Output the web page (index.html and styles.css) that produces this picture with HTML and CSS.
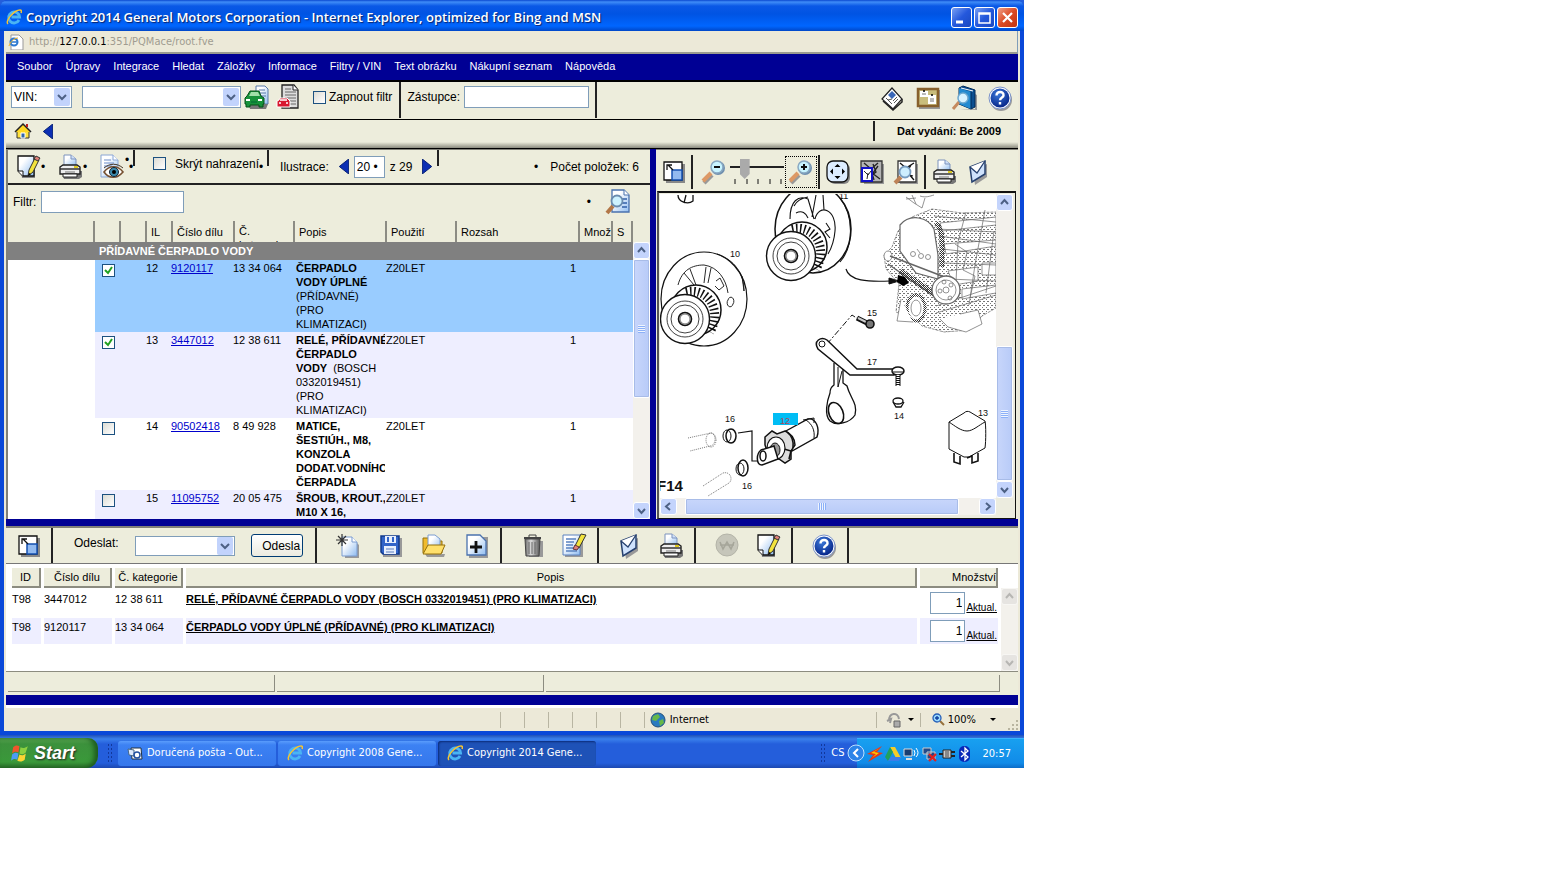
FILE: index.html
```
<!DOCTYPE html>
<html lang="cs">
<head>
<meta charset="UTF-8" />
<meta name="viewport" content="width=device-width, initial-scale=1" />
<title>Copyright 2014 General Motors Corporation</title>
<link rel="stylesheet" href="styles.css">
</head>
<body>

<!-- Icon sprite -->
<svg class="sprite" aria-hidden="true">
  <defs>
    <linearGradient id="paper" x1="0" y1="0" x2="1" y2="1"><stop offset="0.3" stop-color="#fff"/><stop offset="1" stop-color="#8fbcf0"/></linearGradient>
    <linearGradient id="metal" x1="0" y1="0" x2="1" y2="0"><stop offset="0" stop-color="#666"/><stop offset="0.4" stop-color="#ddd"/><stop offset="1" stop-color="#555"/></linearGradient>
    <radialGradient id="ball" cx="0.4" cy="0.3" r="0.8"><stop offset="0" stop-color="#3b78d8"/><stop offset="1" stop-color="#001c80"/></radialGradient>
    <symbol id="i-ie" viewBox="0 0 16 16">
      <path d="M13 11a5.500 5.500 0 1 1 .6-3H5.500" fill="none" stroke="#49b4f4" stroke-width="2.800"/>
      <path d="M2 15C-1 12 8 1 14 1c2 0 1.500 2 1 3" fill="none" stroke="#f4c434" stroke-width="1.500"/>
    </symbol>
    <symbol id="i-car" viewBox="0 0 26 26">
      <path d="M12 2h9l3 3v15H12z" fill="url(#paper)" stroke="#5779a8"/><path d="M15 6h6M15 9h7M17 12h5" stroke="#5779a8"/>
      <path d="M5 20h19l-2 5H6z" fill="#777"/>
      <path d="M2 20v3h4v-2h9v2h4v-3h1v-6l-3-2-2-5H6l-3 5-2 2v6z" fill="#16923a" stroke="#045018"/><path d="M5 12l2-4h7l2 4z" fill="#9fe0a8"/><path d="M2 16h4M14 16h4" stroke="#fff" stroke-width="2"/><path d="M7 18h6" stroke="#063"/>
    </symbol>
    <symbol id="i-cardoc" viewBox="0 0 26 26">
      <path d="M6 1h12l4 5v18H6z" fill="#ddd" stroke="#222" stroke-width="1.300"/><path d="M17 1v5h5" fill="#fff" stroke="#222"/>
      <path d="M9 5h6M9 8h11M9 11h11M9 14h11M14 17h6M14 20h6" stroke="#666"/>
      <path d="M1 23v-6l2-1 1-2h7l2 2 1 1v6z" fill="#d81830" stroke="#fff"/><path d="M4 16h7M3 19h2M10 19h2" stroke="#fff" stroke-width="1.500"/>
    </symbol>
    <symbol id="i-news" viewBox="0 0 26 26">
      <path d="M3 14L13 3l10 11-9 10z" fill="#fff" stroke="#222" stroke-width="1.200"/><path d="M4 16l10 9 9-8v-3" fill="none" stroke="#222" stroke-width="1.500"/>
      <path d="M9 10l4-4 4 4-4 4z" fill="#3a68b8"/><path d="M7 13l6 6M9 15l4-1M14 16l4-4M15 18l4-4" stroke="#555"/>
    </symbol>
    <symbol id="i-board" viewBox="0 0 26 26">
      <path d="M4 5h21v19H4z" fill="#999"/><path d="M3 4h20v17H3z" fill="#c9bd7c" stroke="#87602c" stroke-width="2.500"/>
      <path d="M5 6h8v6H5zM13 10h8v9h-8z" fill="#fff"/><path d="M7 9h4M15 14h4M15 16h4" stroke="#777"/><circle cx="9" cy="6" r="1"/><circle cx="17" cy="10" r="1"/>
    </symbol>
    <symbol id="i-book" viewBox="0 0 26 26">
      <path d="M9 24h15V9l2 1v15z" fill="#999"/>
      <path d="M8 3l4-2 12 4v17l-4 2-12-5z" fill="#0b4f90" stroke="#012a58"/><path d="M8 3l12 4v17L8 19z" fill="#238ad0"/><path d="M10 3l12 3" stroke="#fff"/><path d="M20 7v17" stroke="#012a58"/>
      <path d="M8 17l-6 7" stroke="#c58a5e" stroke-width="3"/><circle cx="12" cy="13" r="5" fill="#d8f2ff" stroke="#6da8d0" stroke-width="1.500"/>
    </symbol>
    <symbol id="i-help" viewBox="0 0 26 26">
      <circle cx="14" cy="15" r="11" fill="#999"/><circle cx="13" cy="13" r="11" fill="#fff" stroke="#7a92c8"/><circle cx="13" cy="13" r="9.500" fill="url(#ball)"/>
      <path d="M9.500 10.500c0-5 7.500-4.500 7 0-.2 2-3.500 2-3.500 4.800M13 17v2.600" fill="none" stroke="#fff" stroke-width="2.400"/>
    </symbol>
    <symbol id="i-home" viewBox="0 0 18 18">
      <path d="M3 9v7h12V9" fill="#ffe23c" stroke="#333"/><path d="M1 10l8-8 8 8" fill="#ffd824" stroke="#222" stroke-width="1.500"/><path d="M7 16v-5h4v5z" fill="#36a" stroke="#fff"/><path d="M13 5V2" stroke="#b22" stroke-width="2"/>
    </symbol>
    <symbol id="i-note" viewBox="0 0 26 26">
      <path d="M5 4h15v20H7z" fill="#888"/><path d="M3 2h16v20H8l-5-5z" fill="url(#paper)" stroke="#111" stroke-width="1.300"/><path d="M3 17h5v5" fill="#fff" stroke="#111"/>
      <path d="M13 22l1-6 6-12 4 2-6 12z" fill="#f2e33c" stroke="#333"/><path d="M19 5l2-3 4 2-2 3z" fill="#e08078" stroke="#333"/><path d="M13 22l1-3 2 1z"/>
    </symbol>
    <symbol id="i-print" viewBox="0 0 26 26">
      <path d="M5 17h20v6l-3 2H7z" fill="#777"/><path d="M7 12V1h7l5 4v7z" fill="url(#paper)" stroke="#7d93bd"/><path d="M14 1v4h5" fill="#cfe0fa" stroke="#7d93bd"/>
      <path d="M3 13l3-2h14l3 2v7H3z" fill="#eee" stroke="#222" stroke-width="1.400"/><path d="M3 15h20" stroke="#333" stroke-width="1.500"/><path d="M6 20h14v3H6z" fill="#fff" stroke="#222"/><path d="M17 13h4" stroke="#dcc820" stroke-width="2"/><path d="M8 18h10" stroke="#777"/>
    </symbol>
    <symbol id="i-eye" viewBox="0 0 26 26">
      <path d="M2 1h12l5 5v17H2z" fill="url(#paper)" stroke="#8aa6d4"/><path d="M14 1v5h5" fill="#fff" stroke="#8aa6d4"/><path d="M5 6h7M5 9h10M5 12h8" stroke="#6c8cc8"/>
      <path d="M5 18c5-7 14-7 19 0-6 7-14 7-19 0z" fill="#fff" stroke="#765030" stroke-width="1.600"/><circle cx="15" cy="18" r="4.500" fill="#3c8aac" stroke="#123"/><circle cx="15" cy="18" r="2"/><path d="M5 14c6-5 13-5 19 0" fill="none" stroke="#432"/>
    </symbol>
    <symbol id="i-search-doc" viewBox="0 0 26 26">
      <path d="M7 1h12l5 5v17H7z" fill="url(#paper)" stroke="#4a72ae" stroke-width="1.300"/><path d="M19 1v5h5" fill="#fff" stroke="#4a72ae"/><path d="M17 10h5M17 14h5M17 18h5" stroke="#3260a8" stroke-width="1.500"/>
      <path d="M8 17l-6 7" stroke="#b27748" stroke-width="4"/><circle cx="12" cy="12" r="5.500" fill="#cdf2ff" stroke="#6b8cae" stroke-width="1.800"/>
    </symbol>
    <symbol id="i-fit" viewBox="0 0 26 26">
      <path d="M5 5h19v19H5z" fill="#888"/><path d="M3 3h18v18H3z" fill="#fff" stroke="#111" stroke-width="1.300"/><path d="M11 11h10v10H11z" fill="#92baf0" stroke="#1550b0" stroke-width="1.500"/><path d="M12 11L7 6M6 11V6h5" fill="none" stroke="#111" stroke-width="1.300"/>
    </symbol>
    <symbol id="i-minus" viewBox="0 0 26 26">
      <path d="M11 16l-8 8" stroke="#999" stroke-width="4.500"/><path d="M10 14l-8 8" stroke="#dd9865" stroke-width="4"/><circle cx="17" cy="9" r="7" fill="#6f8fae"/><circle cx="16" cy="8" r="6" fill="#c8f4ff" stroke="#8aa9c2" stroke-width="1.500"/><path d="M13 8h6" stroke="#111" stroke-width="2"/>
    </symbol>
    <symbol id="i-plus" viewBox="0 0 26 26"><use href="#i-minus"/><path d="M16 5v6" stroke="#111" stroke-width="2"/></symbol>
    <symbol id="i-move" viewBox="0 0 26 26">
      <rect x="4" y="4" width="21" height="21" rx="6" fill="#888"/><rect x="2" y="2" width="21" height="21" rx="6" fill="#dcecff" stroke="#111" stroke-width="1.300"/>
      <path d="M12.500 5l3 3h-6zM12.500 20l3-3h-6zM5 12.500l3-3v6zM20 12.500l-3-3v6z"/>
    </symbol>
    <symbol id="i-part" viewBox="0 0 26 26">
      <path d="M5 5h20v20H5z" fill="#999"/><path d="M2 2h21v21H2z" fill="#b4b4b4" stroke="#333" stroke-width="1.300"/><path d="M5 4l7 6 7-6M15 21l-2-7 8 6M14 5l3 8-5 4M19 7l-5 7" fill="none" stroke="#222" stroke-width="1.300"/>
      <path d="M3 9h10v13H3z" fill="#fff" stroke="#1212c8" stroke-width="2"/><path d="M5 12l4 4 3-4M8 20l1-6" fill="none" stroke="#222"/>
    </symbol>
    <symbol id="i-partzoom" viewBox="0 0 26 26">
      <path d="M7 5h18v20H7z" fill="#999"/><path d="M5 2h18v21H5z" fill="#fff" stroke="#333" stroke-width="1.300"/><path d="M7 4l6 5 8-5M21 21l-6-7M18 6l-5 9 7 2" fill="none" stroke="#111" stroke-width="1.300"/>
      <path d="M8 18l-6 6" stroke="#bd8257" stroke-width="4"/><circle cx="12" cy="13" r="5.500" fill="#cdeeff" stroke="#789cc0" stroke-width="1.800"/>
    </symbol>
    <symbol id="i-mail" viewBox="0 0 26 26">
      <path d="M7 11l14-6v13L9 26z" fill="#999"/><path d="M4 8l15-6v13L6 23z" fill="#cfe2fc" stroke="#26406e" stroke-width="1.500"/><path d="M4 8l7 6 8-12" fill="#fff" stroke="#26406e" stroke-width="1.300"/>
    </symbol>
    <symbol id="i-new" viewBox="0 0 26 26">
      <path d="M10 7h9l5 5v13H10z" fill="#999"/><path d="M7 4h10l5 5v14H7z" fill="url(#paper)" stroke="#7b9cd0"/><path d="M17 4v5h5" fill="#fff" stroke="#7b9cd0"/><path d="M7 1v12M1 7h12M3 3l8 8M11 3l-8 8" stroke="#333" stroke-width="1.200"/>
    </symbol>
    <symbol id="i-save" viewBox="0 0 26 26">
      <path d="M5 5h19v19H5z" fill="#999"/><path d="M3 3h18v18H5l-2-2z" fill="#3264c8" stroke="#123a8c" stroke-width="1.500"/><path d="M7 3h11v7H7zM6 13h12v8H6z" fill="#e8effc"/><path d="M10 4v5M15 4v5" stroke="#3264c8" stroke-width="2"/><path d="M8 16h8M8 19h8" stroke="#5d7fbd"/>
    </symbol>
    <symbol id="i-open" viewBox="0 0 26 26">
      <path d="M4 21h20l-1 3H6z" fill="#999"/><path d="M2 5h6l2 3h11v12H2z" fill="#f0bb2c" stroke="#94700c"/><path d="M7 2h7l5 4v12H7z" fill="url(#paper)" stroke="#7b9cd0"/><path d="M2 21l5-9h17l-4 9z" fill="#ffe06c" stroke="#94700c"/>
    </symbol>
    <symbol id="i-add" viewBox="0 0 26 26">
      <path d="M5 4h19v21H5z" fill="#999"/><path d="M3 2h13l6 6v14H3z" fill="url(#paper)" stroke="#4a72ae" stroke-width="1.300"/><path d="M12 8v12M6 14h12" stroke="#111" stroke-width="2.800"/>
    </symbol>
    <symbol id="i-bin" viewBox="0 0 26 26">
      <path d="M8 8h15v16H9z" fill="#999"/><path d="M5 6h15l-1 17H6z" fill="url(#metal)" stroke="#444"/><path d="M4 5h17" stroke="#444" stroke-width="2"/><path d="M9 5V2h7v3" fill="none" stroke="#444"/><path d="M9 9v12M12 9v12M15 9v12" stroke="#666"/>
    </symbol>
    <symbol id="i-erase" viewBox="0 0 26 26">
      <path d="M4 4h18v20H4z" fill="#999"/><path d="M2 2h17v20H2z" fill="url(#paper)" stroke="#5a82c0"/><path d="M5 6h10M5 9h8M5 12h7M5 15h9M5 18h11" stroke="#5a82c0" stroke-width="1.300"/><path d="M14 13l6-12 5 1-7 13z" fill="#f2e33c" stroke="#333"/><path d="M12 16l2-4 4 2-2 3z" fill="#e08078" stroke="#633"/>
    </symbol>
    <symbol id="i-w" viewBox="0 0 26 26">
      <circle cx="13" cy="12" r="11" fill="#c6c6ba" stroke="#b4b4a8"/><path d="M6 9l3 7 4-7 4 7 3-7M6 12h14" fill="none" stroke="#a6a69a" stroke-width="1.600"/>
    </symbol>
    <symbol id="i-globe" viewBox="0 0 16 16"><circle cx="8" cy="8" r="7" fill="#2a7ac0" stroke="#265078"/><path d="M3 4l5-2 2 3-4 4-4-1zM9 9l4-2 1 4-4 3z" fill="#67b848"/></symbol>
    <symbol id="i-tri" viewBox="0 0 10 16"><path d="M10 0v16L0 8z" fill="#0c2fb4" stroke="#001c70"/></symbol>
  </defs>
</svg>

<div class="desktop">
  <div class="window">
    <header class="titlebar">
      <svg class="ico16"><use href="#i-ie"/></svg>
      <h1>Copyright 2014 General Motors Corporation - Internet Explorer, optimized for Bing and MSN</h1>
      <button class="winbtn" aria-label="Minimize"><svg viewBox="0 0 19 19"><path d="M4 14h7" stroke="#fff" stroke-width="3"/></svg></button>
      <button class="winbtn" aria-label="Maximize"><svg viewBox="0 0 19 19"><path d="M4 5h11v10H4zM4 6h11" fill="none" stroke="#fff" stroke-width="1.500"/></svg></button>
      <button class="winbtn winbtn-close" aria-label="Close"><svg viewBox="0 0 19 19"><path d="M5 5l9 9M14 5l-9 9" stroke="#fff" stroke-width="2.200"/></svg></button>
    </header>

    <div class="client">
      <div class="address">
        <svg class="ico16" viewBox="0 0 16 16"><path d="M3 1h8l4 4v11H3z" fill="#fff" stroke="#999"/><circle cx="6" cy="8" r="3.500" fill="none" stroke="#2c78d0" stroke-width="2"/><path d="M3 8h6" stroke="#2c78d0" stroke-width="1.500"/><path d="M1 12c1-4 5-8 9-8" fill="none" stroke="#f0b020"/></svg>
        <span>http://<b>127.0.0.1</b>:351/PQMace/root.fve</span>
      </div>

      <nav class="menu">
        <a href="#">Soubor</a><a href="#">Úpravy</a><a href="#">Integrace</a><a href="#">Hledat</a><a href="#">Záložky</a><a href="#">Informace</a><a href="#">Filtry / VIN</a><a href="#">Text obrázku</a><a href="#">Nákupní seznam</a><a href="#">Nápověda</a>
      </nav>

      <div class="toolbar">
        <div class="vin-group">
          <select class="combo vin-type" aria-label="Typ"><option>VIN:</option></select>
          <select class="combo vin-value" aria-label="VIN"><option></option></select>
          <button class="icon" aria-label="Vozidlo"><svg><use href="#i-car"/></svg></button>
          <button class="icon" aria-label="Smazat vozidlo"><svg><use href="#i-cardoc"/></svg></button>
          <label class="check"><input type="checkbox"> Zapnout filtr</label>
        </div>
        <div class="proxy-group">
          <label for="proxy">Zástupce:</label><input class="field proxy" id="proxy" type="text">
        </div>
        <div class="tools-right">
          <button class="icon" aria-label="Novinky"><svg><use href="#i-news"/></svg></button>
          <button class="icon" aria-label="Nástěnka"><svg><use href="#i-board"/></svg></button>
          <button class="icon" aria-label="Katalog"><svg><use href="#i-book"/></svg></button>
          <button class="icon" aria-label="Nápověda"><svg><use href="#i-help"/></svg></button>
        </div>
      </div>

      <div class="crumbs">
        <a href="#" aria-label="Domů"><svg class="home"><use href="#i-home"/></svg></a>
        <a href="#" aria-label="Zpět"><svg class="tri"><use href="#i-tri"/></svg></a>
        <span class="issue">Dat vydání: Be 2009</span>
      </div>

      <main class="split">
        <section class="catalog">
          <div class="cat-tools">
            <button class="icon" aria-label="Poznámka"><svg><use href="#i-note"/></svg></button><i class="dot">•</i>
            <button class="icon" aria-label="Tisk"><svg><use href="#i-print"/></svg></button><i class="dot">•</i>
            <button class="icon" aria-label="Náhled"><svg><use href="#i-eye"/></svg></button><i class="dot dot-up">•</i><i class="dot">•</i>
            <i class="tick"></i>
            <label class="check hide-check"><input type="checkbox"> Skrýt nahrazení</label><i class="dot">•</i>
            <i class="tick"></i>
            <label class="illus" for="page">Ilustrace:</label>
            <button class="step" aria-label="Předchozí"><svg class="tri"><use href="#i-tri"/></svg></button>
            <input class="field page" id="page" type="text" value="20 •">
            <span class="total">z 29</span>
            <button class="step" aria-label="Další"><svg class="tri tri-next"><use href="#i-tri"/></svg></button>
            <i class="tick"></i>
            <span class="count"><i>•</i>Počet položek: 6</span>
          </div>
          <div class="cat-filter">
            <label for="filter">Filtr:</label><input class="field filter" id="filter" type="text">
            <i>•</i>
            <button class="icon" aria-label="Hledat"><svg><use href="#i-search-doc"/></svg></button>
          </div>
          <div class="list">
            <table class="parts">
              <colgroup><col class="c-tree"><col class="c-s"><col class="c-s"><col class="c-s"><col class="c-num"><col class="c-cat"><col class="c-desc"><col class="c-use"><col><col class="c-qty"><col class="c-flag"></colgroup>
              <thead>
                <tr><th></th><th></th><th></th><th>IL</th><th>Číslo dílu</th><th class="wrap"><div>Č.<br>kategorie</div></th><th>Popis</th><th>Použití</th><th>Rozsah</th><th>Množ</th><th>S</th></tr>
              </thead>
              <tbody>
                <tr class="group"><td></td><td colspan="10">PŘÍDAVNÉ ČERPADLO VODY</td></tr>
                <tr class="selected"><td></td><td><input type="checkbox" checked aria-label="12"></td><td></td><td>12</td><td><a href="#">9120117</a></td><td>13 34 064</td><td><b>ČERPADLO<br>VODY ÚPLNÉ</b><br>(PŘÍDAVNÉ)<br>(PRO<br>KLIMATIZACI)</td><td>Z20LET</td><td class="qty">1</td><td></td><td></td></tr>
                <tr class="alt"><td></td><td><input type="checkbox" checked aria-label="13"></td><td></td><td>13</td><td><a href="#">3447012</a></td><td>12 38 611</td><td><b>RELÉ, PŘÍDAVNÉ<br>ČERPADLO<br>VODY</b> &nbsp;(BOSCH<br>0332019451)<br>(PRO<br>KLIMATIZACI)</td><td>Z20LET</td><td class="qty">1</td><td></td><td></td></tr>
                <tr><td></td><td><input type="checkbox" aria-label="14"></td><td></td><td>14</td><td><a href="#">90502418</a></td><td>8 49 928</td><td><b>MATICE,<br>ŠESTIÚH., M8,<br>KONZOLA<br>DODAT.VODNÍHO<br>ČERPADLA</b></td><td>Z20LET</td><td class="qty">1</td><td></td><td></td></tr>
                <tr class="alt"><td></td><td><input type="checkbox" aria-label="15"></td><td></td><td>15</td><td><a href="#">11095752</a></td><td>20 05 475</td><td><b>ŠROUB, KROUT.,<br>M10 X 16,</b></td><td>Z20LET</td><td class="qty">1</td><td></td><td></td></tr>
              </tbody>
            </table>
            <div class="scroll scroll-v">
              <button class="sb up" aria-label="Nahoru"></button><div class="thumb"></div><button class="sb down" aria-label="Dolů"></button>
            </div>
          </div>
        </section>

        <section class="viewer">
          <div class="view-tools">
            <div class="vg vg-fit"><button class="icon" aria-label="Velikost"><svg><use href="#i-fit"/></svg></button></div>
            <div class="vg vg-zoom">
              <button class="icon" aria-label="Zmenšit"><svg><use href="#i-minus"/></svg></button>
              <div class="zoomer">
                <input type="range" min="0" max="100" value="22" aria-label="Zoom">
                <svg viewBox="0 0 54 5"><path d="M5 0v5M17 0v5M28 0v5M40 0v5M51 0v5" stroke="#111"/></svg>
              </div>
              <button class="icon focused" aria-label="Zvětšit"><svg><use href="#i-plus"/></svg></button>
            </div>
            <div class="vg vg-mode">
              <button class="icon" aria-label="Posun"><svg><use href="#i-move"/></svg></button>
              <button class="icon" aria-label="Přehled"><svg><use href="#i-part"/></svg></button>
              <button class="icon" aria-label="Lupa"><svg><use href="#i-partzoom"/></svg></button>
            </div>
            <div class="vg vg-out">
              <button class="icon" aria-label="Tisk"><svg><use href="#i-print"/></svg></button>
              <button class="icon" aria-label="Odeslat"><svg><use href="#i-mail"/></svg></button>
            </div>
          </div>

          <div class="canvas">
            <svg class="drawing" viewBox="660 194 336 302" fill="none" stroke="#111">
              <defs>
                <pattern id="dots" width="4" height="4" patternUnits="userSpaceOnUse"><path d="M0 0h1v1H0zM2 2h1v1H2zM3 0h1v1H3z" fill="#777" stroke="none"/></pattern>
                <pattern id="dense" width="2" height="2" patternUnits="userSpaceOnUse"><path d="M0 0h1v1H0zM1 1h1v1H1z" fill="#333" stroke="none"/></pattern>
                <g id="pulley">
                  <circle cx="11" cy="-9" r="25" fill="#fff" stroke-width="1.500"/>
                  <path d="M1-27C22-32 38-10 25 13" stroke-width="9" stroke-dasharray="1.500 2.500"/>
                  <circle r="24.500" fill="#fff" stroke-width="1.400"/>
                  <circle r="18" stroke-width="0.800"/><circle r="14" stroke-width="0.800"/><circle r="6.500" stroke-width="1.600"/><circle r="5" stroke-width="0.600"/>
                </g>
              </defs>
              <!-- nut at the corner -->
              <path d="M678 194c0 7 10 10 15 6v-6M686 194l-2 8" stroke-width="1.300"/>
              <!-- rear covers with pulleys -->
              <ellipse cx="813" cy="228" rx="38" ry="44" fill="#fff" stroke-width="1.500"/>
              <path d="M840 197c14 18 14 48 0 64M790 218c0-18 8-24 18-20l6 20M816 194l-4 22M823 194l1 15M815 218c4-16 22-10 20 12-1 12-4 18-7 23M826 222l4 6-5 3 5 6M796 212c6-3 10 0 12 5M794 205c3-6 8-8 14-9" stroke-width="1.100"/>
              <use href="#pulley" x="791" y="255"/>
              <ellipse cx="704" cy="298" rx="43" ry="47" fill="#fff" stroke-width="1.200"/>
              <path d="M717 253c18 6 27 20 27 37M678 284c4-15 14-20 26-20 14 2 22 14 24 28M684 272l10 12M690 268l6 16M706 266l-2 16M711 267l-3 15M716 280l4-3 4 8-5 4-4-4M728 299a3 4 0 1 0 5 4 3 4 0 1 0-5-4M742 275l2 15" stroke-width="0.900"/>
              <use href="#pulley" x="685" y="318"/>
              <!-- arrow -->
              <path d="M846 268c3 12 22 13 44 12" stroke-width="1.200"/><path d="M889 277l10 3-10 3z" fill="#111"/>
              <!-- engine block -->
              <g stroke="#666" stroke-width="0.700">
                <path d="M906 196l8 6 8 5 3-10M912 194l4 9M920 195c6 2 10 0 14-1M906 198l10-1"/>
                <path d="M898 230l14-14 20-8 30 4 34-1v96l-14 8-12 14-26 2-22-6-6-6-20-8 3-28-13-15-2-14 8-8z" fill="url(#dots)" stroke-dasharray="3 1"/>
                <path d="M940 222l56-6v8l-54 6zM944 243l52-4v6l-50 8zM948 270l30-4v14l-24 4zM982 262h14v12h-14zM962 288l34-4v8l-34 6z" fill="#fff"/>
                <path d="M934 215l62 6M937 228l59 3M939 235l57 8M942 248l54 6M944 262l52 2M948 278l48 2M966 211l-8 30-2 40M985 209l-10 55-6 40M994 230l-8 62M955 243l12 8-4 18 12 6-5 22M936 305l60-20M936 312l60-18"/>
                <path d="M936 222c8 8 6 20 6 44" stroke="url(#dense)" stroke-width="5"/>
                <path d="M900 224c10-12 28-8 34 4l4 26v24l-22-6-16-22z" fill="#fff" stroke-width="1.200"/>
                <ellipse cx="888" cy="255" rx="4" ry="5" fill="#fff"/><circle cx="913" cy="253" r="2.500"/><circle cx="921" cy="255" r="2.500"/><circle cx="928" cy="256" r="2.500"/><path d="M917 248l3 4"/>
                <path d="M890 255l52 20M888 263l46 32" stroke-width="1.500"/><path d="M900 270l36 24" stroke="url(#dense)" stroke-width="6"/>
                <circle cx="946" cy="289" r="14" fill="#fff" stroke-width="1.300"/><circle cx="946" cy="289" r="10"/><circle cx="946" cy="289" r="3"/><circle cx="940" cy="290" r="2"/><circle cx="951" cy="284" r="2"/><circle cx="950" cy="297" r="2"/><circle cx="944" cy="281" r="2"/>
                <ellipse cx="916" cy="307" rx="9" ry="13" fill="#fff" stroke="url(#dense)" stroke-width="3"/><ellipse cx="916" cy="307" rx="5" ry="8"/>
                <path d="M901 298l-4 22 16 1M940 318l8 8 18 5 16-8-4-14-18 4" fill="#fff"/>
              </g>
              <path d="M898 274l7 2 4 6-6 3-6-4z" fill="#000" stroke="none"/>
              <!-- bolt 15 -->
              <path d="M827 343l25-29 6 4" stroke-dasharray="6 2 2 2"/>
              <path d="M857 317l12 6" stroke-width="5"/><path d="M858 317l10 5" stroke="#ccc" stroke-width="2"/><circle cx="870" cy="323" r="4" fill="#777" stroke-width="1.600"/>
              <!-- bracket 17 -->
              <path d="M834 362v22c-3 2-4 4-4 8-3 8-6 22 0 28 6 5 20 2 25-6 3-12-5-17-8-29l-4-3v-20" fill="#fff" stroke-width="1.300"/><ellipse cx="836" cy="412" rx="7" ry="11" transform="rotate(-22 836 412)" stroke-width="1.600"/><path d="M838 366v20l4-16"/>
              <path d="M818 348c-5-8 3-13 9-9l30 29h37v6h-44z" fill="#fff" stroke-width="1.500"/><circle cx="822" cy="343" r="3"/><ellipse cx="898" cy="370" rx="6" ry="4" fill="#fff" stroke-width="1.500"/><path d="M893 371h11"/><path d="M898 374v11" stroke-width="5"/><path d="M898 374v11" stroke="#fff" stroke-width="3" stroke-dasharray="1 1"/>
              <ellipse cx="898" cy="400" rx="5" ry="3" stroke-width="1.300"/><path d="M893 401l3 5h5l3-5" stroke-width="1.300"/>
              <!-- relay 13 -->
              <path d="M949 421l15-9c2-2 4-2 6-1l15 9c1 4 1 20 0 27l-16 9h-5l-15-8zM949 421c6 4 12 9 18 9s12-6 18-9" fill="#fff"/><path d="M954 452v9l6 2v-8M978 452v8l-6 2v-8M967 457l5-2" stroke-width="1.600"/>
              <!-- hoses and clamps -->
              <g stroke="#555" stroke-width="0.800" stroke-dasharray="1 1"><path d="M688 437l23-5c6 1 5 13-1 13l-20 5"/><ellipse cx="711" cy="439" rx="5" ry="7"/><path d="M703 485l20-13c8-2 10 7 6 10l-21 13"/></g>
              <ellipse cx="731" cy="435" rx="5" ry="7" stroke-width="1.500"/><ellipse cx="727" cy="435" rx="4" ry="6"/><ellipse cx="743" cy="467" rx="5" ry="8" stroke-width="1.500"/><ellipse cx="740" cy="468" rx="4" ry="6"/>
              <path d="M738 432l14-2v30h5" stroke-width="1.200"/>
              <!-- pump 12 -->
              <path d="M784 431l24-13c8-1 12 9 9 18l-25 14z" fill="#fff" stroke-width="1.400"/><path d="M803 419l11-2v5M806 419c6 4 9 10 8 18"/>
              <path d="M765 436l7-6 5 3 8-3c6 2 10 8 10 14l-4 6v8l-6 4-6-4-10-2-4-12z" fill="#ddd" stroke-width="1.500"/><path d="M787 431c5 4 7 9 6 16M784 448l7 2-2 8" stroke-width="1.600"/><ellipse cx="776" cy="447" rx="9" ry="11" fill="#fff" stroke-width="1.200"/><ellipse cx="775" cy="449" rx="5" ry="7" fill="#999"/>
              <path d="M774 445l-13 4c-5 4-5 15 1 15l16-6z" fill="#fff" stroke-width="1.500"/><ellipse cx="763" cy="455" rx="3" ry="5" stroke-width="1.500"/>
              <path d="M773 412h25v12h-25z" fill="#00bdf5" stroke="none"/>
              <g class="callouts"><text x="730" y="256">10</text><text x="839" y="198">11</text><text x="867" y="315">15</text><text x="867" y="364">17</text><text x="894" y="418">14</text><text x="978" y="415">13</text><text x="725" y="421">16</text><text x="742" y="488">16</text><text class="hot" x="780" y="423">12</text><text class="fig" x="657" y="490">F14</text></g>
            </svg>
            <div class="scroll scroll-v"><button class="sb up" aria-label="Nahoru"></button><div class="thumb"></div><button class="sb down" aria-label="Dolů"></button></div>
            <div class="scroll scroll-h"><button class="sb sb-left" aria-label="Vlevo"></button><div class="thumb"></div><button class="sb sb-right" aria-label="Vpravo"></button></div>
          </div>
        </section>
      </main>

      <section class="basket">
        <div class="basket-tools">
          <div class="bg bg-fit"><button class="icon" aria-label="Velikost"><svg><use href="#i-fit"/></svg></button></div>
          <div class="bg bg-send"><label for="send">Odeslat:</label><select class="combo send" id="send"><option></option></select><button class="send-btn">Odesla</button></div>
          <div class="bg bg-file">
            <button class="icon" aria-label="Nový"><svg><use href="#i-new"/></svg></button>
            <button class="icon" aria-label="Uložit"><svg><use href="#i-save"/></svg></button>
            <button class="icon" aria-label="Otevřít"><svg><use href="#i-open"/></svg></button>
            <button class="icon" aria-label="Přidat"><svg><use href="#i-add"/></svg></button>
          </div>
          <div class="bg"><button class="icon" aria-label="Smazat"><svg><use href="#i-bin"/></svg></button><button class="icon" aria-label="Vymazat"><svg><use href="#i-erase"/></svg></button></div>
          <div class="bg"><button class="icon" aria-label="Pošta"><svg><use href="#i-mail"/></svg></button><button class="icon" aria-label="Tisk"><svg><use href="#i-print"/></svg></button></div>
          <div class="bg"><button class="icon" aria-label="Záruka"><svg><use href="#i-w"/></svg></button><button class="icon" aria-label="Poznámka"><svg><use href="#i-note"/></svg></button></div>
          <div class="bg"><button class="icon" aria-label="Nápověda"><svg><use href="#i-help"/></svg></button></div>
        </div>
        <div class="basket-body">
          <table class="order">
            <colgroup><col class="o-id"><col class="o-num"><col class="o-num"><col><col class="o-qty"></colgroup>
            <thead><tr><th>ID</th><th>Číslo dílu</th><th>Č. kategorie</th><th>Popis</th><th class="num-head">Množství</th></tr></thead>
            <tbody>
              <tr><td>T98</td><td>3447012</td><td>12 38 611</td><td><a href="#">RELÉ, PŘÍDAVNÉ ČERPADLO VODY (BOSCH 0332019451) (PRO KLIMATIZACI)</a></td><td><div class="amount"><input class="field" type="text" value="1" aria-label="Množství 3447012"><a href="#">Aktual.</a></div></td></tr>
              <tr class="alt"><td>T98</td><td>9120117</td><td>13 34 064</td><td><a href="#">ČERPADLO VODY ÚPLNÉ (PŘÍDAVNÉ) (PRO KLIMATIZACI)</a></td><td><div class="amount"><input class="field" type="text" value="1" aria-label="Množství 9120117"><a href="#">Aktual.</a></div></td></tr>
            </tbody>
          </table>
          <div class="scroll scroll-v"><button class="sb up" disabled aria-label="Nahoru"></button><button class="sb down" disabled aria-label="Dolů"></button></div>
        </div>
        <div class="panels"><div></div><div></div><div></div></div>
      </section>

      <footer class="status">
        <div class="slots"><i></i><i></i><i></i><i></i><i></i><i></i><i></i></div>
        <div class="zone"><svg class="ico16"><use href="#i-globe"/></svg>Internet</div>
        <div class="protect"><svg class="ico16" viewBox="0 0 16 16"><path d="M1 9l4-2-1 4M3 9c0-9 9-9 10-2" fill="none" stroke="#999" stroke-width="2"/><path d="M8 9h6v6H8z" fill="#aaa" stroke="#666"/></svg><i class="caret"></i></div>
        <div class="zoomlvl"><svg viewBox="0 0 13 13"><path d="M8 8l4 4" stroke="#96703c" stroke-width="2"/><circle cx="5" cy="5" r="4" fill="#9cdcff" stroke="#2860b8" stroke-width="1.300"/><path d="M3 5h4M5 3v4" stroke="#0c3c9c" stroke-width="1.300"/></svg>100%<i class="caret"></i></div>
        <svg class="grip" viewBox="0 0 11 11"><path d="M9 0h2v2H9zM5 4h2v2H5zM9 4h2v2H9zM1 8h2v2H1zM5 8h2v2H5zM9 8h2v2H9z" fill="#b8b4a0"/></svg>
      </footer>
    </div>
  </div>

  <div class="taskbar">
    <button class="start"><svg viewBox="0 0 20 20"><path d="M3 4c2-2 4-2 6-1L8 9C6 8 4 8 2 10z" fill="#f0552c"/><path d="M10 4c2 1 4 1 7-1l-2 6c-2 2-4 2-6 1z" fill="#8cd040"/><path d="M2 11c2-2 4-2 6-1l-1 6c-2-1-4-1-6 1z" fill="#4c9cf4"/><path d="M9 11c2 1 4 1 6-1l-1 6c-2 2-5 2-7 1z" fill="#fcd434"/></svg>Start</button>
    <i class="handle"></i>
    <div class="tasks">
      <button><svg class="ico16" viewBox="0 0 16 16"><path d="M4 3h10l1 11H5z" fill="#fff" stroke="#234"/><path d="M1 4l6 1v6l-5-1z" fill="#dce8fc" stroke="#468"/><circle cx="10" cy="10" r="3" fill="none" stroke="#2350a0" stroke-width="1.500"/></svg>Doručená pošta - Out...</button>
      <button><svg class="ico16"><use href="#i-ie"/></svg>Copyright 2008 Gene...</button>
      <button class="active"><svg class="ico16"><use href="#i-ie"/></svg>Copyright 2014 Gene...</button>
    </div>
    <i class="handle"></i>
    <span class="lang">CS</span>
    <button class="expand" aria-label="Zobrazit ikony"><svg viewBox="0 0 18 18"><circle cx="9" cy="9" r="8" fill="#2c84e8" stroke="#bfe0ff"/><path d="M11 5L7 9l4 4" fill="none" stroke="#fff" stroke-width="2"/></svg></button>
    <div class="tray">
      <svg viewBox="0 0 16 16"><path d="M15 0L0 8l6 1-5 7L16 7l-6-1z" fill="#e83818"/><path d="M13 2L4 7l5 1-4 4 7-5-5-1z" fill="#fc0"/></svg>
      <svg viewBox="0 0 16 16"><path d="M5 1h5l6 11h-5z" fill="#f4cc28"/><path d="M5 1L0 11l3 4 5-9z" fill="#20a060"/><path d="M6 11h10l-2 4H3z" fill="#3c7ce8"/></svg>
      <svg viewBox="0 0 16 16"><path d="M1 3h8v7H1z" fill="#183c70" stroke="#ddd"/><path d="M3 13h6" stroke="#ddd" stroke-width="2"/><path d="M11 4q2 3 0 6M13 2q4 5 0 9" fill="none" stroke="#fff"/></svg>
      <svg viewBox="0 0 16 16"><path d="M2 2h8v6H2zM6 6h8v7H6z" fill="#234a88" stroke="#ccc"/><path d="M8 8l7 7M15 8l-7 7" stroke="#e02020" stroke-width="2.200"/></svg>
      <svg viewBox="0 0 16 16"><path d="M4 4h8v8H4z" fill="#ccc" stroke="#222"/><path d="M0 8h4M12 6h4M12 10h4" stroke="#222" stroke-width="2"/><path d="M7 5v6M9 5v6" stroke="#444"/></svg>
      <svg viewBox="0 0 16 16"><rect x="2" y="0" width="11" height="16" rx="5" fill="#0828b8"/><path d="M4 5l7 6-3 3V2l3 3-7 6" fill="none" stroke="#fff" stroke-width="1.300"/></svg>
      <time>20:57</time>
    </div>
  </div>
</div>
</body>
</html>
```
FILE: styles.css
```
* {
  margin: 0; padding: 0; box-sizing: border-box;
}
body {
  background: #fff;
  color: #000;
  font: 11px/14px "Liberation Sans", Arial, sans-serif;
}
button, input, select {
  font: inherit;
  color: inherit;
}
i { font-style: normal; }
svg { display: block; flex: none; }
.sprite { position: absolute; width: 0; height: 0; }
.desktop { max-width: 1024px; background: #245edb; }

/* Window frame */
.window {
  border: solid #0a48d8;
  border-width: 0 4px 4px;
  border-radius: 8px 8px 0 0;
  background: #0a48d8;
}
.titlebar {
  display: flex;
  align-items: center;
  gap: 2px;
  height: 31px;
  margin: 0 -4px;
  padding: 3px 6px 0;
  border-radius: 8px 8px 0 0;
  background: linear-gradient(#0a48d0, #3f8cf8 2px, #0a58e6 6px, #0054e3 14px, #0066ff 26px, #0047c8);
}
.titlebar h1 {
  flex: 1;
  margin-left: 2px;
  font: 600 13px/18px "Open Sans", "Trebuchet MS", sans-serif;
  color: #fff;
  text-shadow: 1px 1px 1px #0a246a;
  white-space: nowrap;
  overflow: hidden;
}
.ico16 { width: 16px; height: 16px; }
.winbtn {
  width: 21px;
  height: 21px;
  border: 1px solid #fff;
  border-radius: 3px;
  background: linear-gradient(135deg, #7aa0f4, #2458dc 50%, #1a48c0);
}
.winbtn-close { background: linear-gradient(135deg, #f0a088, #dc4a24 50%, #c03410); }
.client {
  padding: 0 2px 0 2px;
  background: #ece9d8;
}
.address {
  display: flex;
  align-items: center;
  gap: 5px;
  height: 23px;
  padding-left: 2px;
  border-bottom: 2px solid #9a9a90;
  border-right: 1px solid #7f9db9;
  font: 11px/14px "DejaVu Sans Condensed", Tahoma, sans-serif;
  color: #a09c90;
}
.address b { font-weight: normal; color: #000; }

/* Menu and main toolbar */
.menu {
  display: flex;
  gap: 13px;
  height: 28px;
  padding: 5px 11px;
  border-bottom: 2px solid #000;
  background: #000094;
}
.menu a { color: #fff; text-decoration: none; white-space: nowrap; }
.toolbar {
  display: flex;
  height: 38px;
  padding-left: 5px;
  border-bottom: 1px solid #000;
  background: #ededdc;
  font-size: 12px;
}
.vin-group, .proxy-group, .tools-right { display: flex; align-items: center; }
.vin-group, .proxy-group { height: 36px; padding-bottom: 6px; border-right: 2px solid #222; }
.vin-group { padding-right: 7px; }
.proxy-group { padding: 0 6px 6px; gap: 4px; }
.tools-right { gap: 10px; margin-left: auto; padding: 0 5px 6px 0; }
.combo {
  appearance: none;
  height: 22px;
  padding: 0 2px;
  border: 1px solid #7f9db9;
  border-radius: 0;
  background: #fff url("data:image/svg+xml,%3Csvg xmlns='http://www.w3.org/2000/svg' width='16' height='18'%3E%3Crect width='16' height='18' rx='2' fill='%23c2d3fc'/%3E%3Cpath d='M4 7l4 4 4-4' fill='none' stroke='%234d6185' stroke-width='2'/%3E%3C/svg%3E") no-repeat right 1px center;
}
.vin-type { width: 61px; }
.vin-value { width: 159px; margin: 0 3px 0 10px; }
.vin-group .icon + .icon { margin-left: 6px; }
.vin-group .check { margin-left: 11px; }
.icon {
  width: 26px;
  height: 26px;
  border: 0;
  background: none;
  flex: none;
}
.icon svg { width: 26px; height: 26px; }
.check { display: flex; align-items: center; gap: 3px; white-space: nowrap; }
input[type="checkbox"] {
  appearance: none;
  display: block;
  width: 13px;
  height: 13px;
  border: 1px solid #1c5180;
  background: linear-gradient(135deg, #dcdcd4, #fff);
}
input[type="checkbox"]:checked {
  background: #fff url("data:image/svg+xml,%3Csvg xmlns='http://www.w3.org/2000/svg' width='11' height='11'%3E%3Cpath d='M2 5l3 3 4-6' fill='none' stroke='%2321a121' stroke-width='2'/%3E%3C/svg%3E");
}
.field {
  height: 22px;
  padding: 0 2px;
  border: 1px solid #7f9db9;
  background: #fff;
}
.proxy { width: 125px; }
.crumbs {
  display: flex;
  align-items: center;
  gap: 11px;
  height: 29px;
  padding: 0 17px 6px 8px;
  border-bottom: 1px solid #000;
  background: linear-gradient(#ededdc 22px, #8c8c80);
}
.home { width: 18px; height: 18px; }
.tri { width: 10px; height: 15px; }
.tri-next { transform: scaleX(-1); }
.issue {
  margin-left: auto;
  padding: 3px 0 3px 22px;
  border-left: 2px solid #222;
  font-weight: bold;
}

/* Parts catalogue */
.split {
  display: grid;
  grid-template-columns: minmax(0, 644fr) 6px minmax(0, 362fr);
  background: #000094;
}
.catalog { grid-column: 1; background: #ededdc; border-left: 2px solid #808078; }
.cat-tools {
  display: flex;
  align-items: center;
  height: 36px;
  padding: 0 11px 0 7px;
  border-top: 1px solid #808078;
  border-bottom: 2px solid #222;
  font-size: 12px;
}
.dot { width: 5px; margin-right: 11px; }
.dot + .dot, .dot-up { width: 4px; margin-right: 0; }
.dot-up { padding-bottom: 14px; }
.tick { align-self: flex-start; width: 2px; height: 16px; background: #222; }
.hide-check { gap: 9px; margin-left: 18px; padding-bottom: 6px; }
.hide-check + .dot { margin-right: 3px; }
.illus { margin: 0 10px 0 11px; }
.step { border: 0; background: none; }
.page { width: 31px; margin: 0 5px; }
.total { margin-right: 10px; }
.step + .tick { margin-left: 5px; }
.count { display: flex; gap: 12px; margin-left: auto; white-space: nowrap; }
.cat-filter {
  display: flex;
  align-items: center;
  gap: 5px;
  height: 36px;
  padding: 0 19px 3px 5px;
  font-size: 12px;
}
.filter { width: 143px; margin-right: auto; }
.cat-filter .icon { margin-left: 9px; }
.list { display: flex; height: 298px; overflow: hidden; background: #ededdc; }
.parts {
  flex: 1;
  align-self: flex-start;
  table-layout: fixed;
  width: 0;
  border-collapse: separate;
  border-spacing: 0;
  background: #fff;
}
.c-tree { width: 85px; }
.c-s { width: 26px; }
.c-num { width: 62px; }
.c-cat { width: 60px; }
.c-desc { width: 92px; }
.c-use { width: 70px; }
.c-qty { width: 33px; }
.c-flag { width: 22px; }
.parts th {
  height: 21px;
  padding: 0 0 0 4px;
  overflow: hidden;
  border-left: 2px solid #8c8c84;
  background: #ededdc;
  font-weight: normal;
  text-align: left;
  white-space: nowrap;
}
.parts th:first-child { border-left: 0; }
.parts th:last-child { border-right: 2px solid #8c8c84; }
.parts .wrap { vertical-align: top; }
.wrap div { height: 21px; overflow: hidden; padding-top: 3px; }
.parts td {
  padding: 1px 0 1px 1px;
  overflow: hidden;
  vertical-align: top;
  white-space: nowrap;
}
.parts td:nth-child(2) { padding: 4px 0 0 7px; border-left: 2px solid #fff; }
.parts td:nth-child(5), .parts td:nth-child(6) { padding-left: 0; }
.parts td:nth-child(7) { padding-left: 3px; }
.parts .qty { padding-right: 2px; text-align: right; }
.parts .group td { height: 18px; padding: 2px 6px; border: 0; background: #808080; color: #fff; font-weight: bold; }
.selected td { background: #99ccff; }
.alt td { background: #eeeeff; }
.parts tbody tr td:first-child { background: #fff; }
.parts tbody .group td:first-child { background: #808080; }
.parts a { color: #0000cc; }

/* Scrollbars */
.scroll { display: flex; background: #f3f1ec; }
.scroll-v { flex-direction: column; width: 17px; }
.list .scroll-v { margin-top: 21px; }
.sb {
  width: 17px;
  height: 17px;
  border: 1px solid #fff;
  border-radius: 3px;
  background: #c4d4fc url("data:image/svg+xml,%3Csvg xmlns='http://www.w3.org/2000/svg' width='15' height='15'%3E%3Cpath d='M4 9l3.500-4L11 9' fill='none' stroke='%234d6185' stroke-width='2'/%3E%3C/svg%3E") center;
}
.down { margin-top: auto; transform: rotate(180deg); }
.sb-left { transform: rotate(-90deg); }
.sb-right { margin-left: auto; transform: rotate(90deg); }
.sb:disabled { filter: grayscale(1); opacity: 0.4; }
.thumb {
  border: 1px solid #fff;
  border-radius: 2px;
  outline: 1px solid #a8bce8;
  outline-offset: -2px;
  background: linear-gradient(90deg, #c8d6fb, #b8cbf8);
}
.thumb::before {
  content: "";
  display: block;
  background: repeating-linear-gradient(#eef4fe 0 1px, #8cb0f8 1px 2px);
}
.scroll-v .thumb { display: grid; place-content: center; height: 139px; }
.scroll-v .thumb::before { width: 7px; height: 8px; }
.scroll-h .thumb { display: grid; place-content: center; flex: 0 1 274px; margin-left: 8px; background: linear-gradient(#c8d6fb, #b8cbf8); }
.scroll-h .thumb::before { width: 8px; height: 7px; background: repeating-linear-gradient(90deg, #eef4fe 0 1px, #8cb0f8 1px 2px); }

/* Illustration viewer */
.viewer { grid-column: 3; display: flex; flex-direction: column; padding: 2px 2px 0 1px; background: #ededdc; border-top: 1px solid #808078; }
.view-tools { display: flex; align-items: center; height: 39px; padding-left: 4px; }
.vg { display: flex; align-items: center; height: 34px; border-right: 2px solid #222; }
.vg-fit { padding-right: 4px; }
.vg-zoom { padding: 0 2px 0 8px; }
.vg-mode { gap: 8px; padding: 0 5px; }
.vg-out { gap: 9px; padding-left: 5px; border: 0; }
.zoomer { width: 54px; margin: 0 2px 0 3px; }
.zoomer input { appearance: none; display: block; width: 54px; height: 20px; background: linear-gradient(#222, #222) no-repeat 0 7px / 100% 2px; }
.zoomer input::-webkit-slider-thumb {
  appearance: none;
  width: 10px;
  height: 20px;
  background: #aaa;
  clip-path: polygon(0 0, 100% 0, 100% 75%, 50% 100%, 0 75%);
}
.zoomer svg { width: 54px; height: 5px; }
.focused { width: 30px; height: 30px; outline: 1px dotted #000; padding: 2px; }
.canvas {
  flex: 1;
  display: grid;
  grid-template: minmax(0, 1fr) 17px / minmax(0, 1fr) 17px;
  padding: 1px 2px 3px 1px;
  border: 1px solid #111;
  border-top: 2px solid #111;
  border-left: 2px solid #555;
  background: #ececdf;
}
.drawing { width: 100%; height: 100%; background: #fff; }
.canvas .scroll-v .thumb { margin-top: auto; height: 135px; }
.canvas .scroll-v .down { margin-top: 0; }
.callouts { fill: #111; stroke: none; font-size: 9px; }
.hot { fill: #b04860; }
.fig { font-size: 15px; font-weight: bold; }

/* Shopping list */
.basket { border-top: 7px solid #000094; border-bottom: 10px solid #000094; background: #ededdc; }
.basket-tools { display: flex; height: 38px; border-top: 2px solid #808078; border-bottom: 1px solid #777; font-size: 12px; }
.bg { display: flex; align-items: center; gap: 15px; padding: 0 10px 0 18px; border-right: 2px solid #222; }
.bg-fit { padding-left: 10px; padding-right: 9px; }
.bg-send { gap: 16px; padding: 0 12px 0 21px; }
.bg-send label { padding-bottom: 6px; }
.bg-file { gap: 17px; }
.send { width: 100px; height: 20px; }
.send-btn {
  width: 52px;
  height: 23px;
  padding-left: 9px;
  overflow: hidden;
  border: 1px solid #003c74;
  border-radius: 3px;
  background: linear-gradient(#fff, #ecebe0);
  white-space: nowrap;
}
.basket-body { display: flex; height: 107px; padding-left: 3px; background: #fff; }
.order { flex: 1; align-self: flex-start; table-layout: fixed; width: 0; margin-top: 2px; border-spacing: 3px 2px; }
.o-id { width: 29px; }
.o-num { width: 68px; }
.o-qty { width: 78px; }
.order th { height: 20px; border: solid #8c8c80; border-width: 0 2px 2px 0; background: #ededdc; font-weight: normal; white-space: nowrap; }
.order .num-head { text-align: right; }
.order td { height: 26px; padding-top: 2px; vertical-align: top; white-space: nowrap; }
.order td a { color: #000; font-weight: bold; }
.amount { display: flex; align-items: flex-end; justify-content: flex-end; gap: 1px; padding-right: 1px; }
.amount .field { width: 35px; text-align: right; font-size: 12px; }
.order .amount a { font-weight: normal; font-size: 10px; line-height: 13px; }
.basket-body .scroll { margin-top: 24px; }
.panels { display: flex; gap: 2px; height: 24px; padding: 3px 18px 3px 2px; border-top: 1px solid #8c8c80; }
.panels div { flex: 0 0 267px; border: solid #8c8c80; border-width: 0 1px 1px 0; }
.panels div:last-child { flex: 1; }

/* Browser status bar */
.status {
  display: flex;
  align-items: center;
  height: 26px;
  border-top: 3px solid #fff;
  background: #ece9d8;
  font: 11px/14px "DejaVu Sans Condensed", Tahoma, sans-serif;
}
.slots { display: flex; flex: 1; justify-content: flex-end; gap: 23px; }
.slots i { width: 1px; height: 16px; background: #b8b5a2; }
.zone { display: flex; align-items: center; gap: 4px; width: 231px; padding-left: 5px; }
.protect, .zoomlvl { display: flex; align-items: center; border-left: 1px solid #b8b5a2; }
.protect { gap: 6px; padding: 0 6px 0 9px; }
.zoomlvl { gap: 3px; padding-left: 11px; }
.zoomlvl svg { width: 13px; height: 13px; }
.zoomlvl .caret { margin-left: 11px; }
.caret { border: 3px solid transparent; border-top-color: #000; border-bottom: 0; }
.grip { width: 11px; height: 11px; margin-left: 11px; align-self: flex-end; }

/* Taskbar */
.taskbar {
  display: flex;
  align-items: center;
  height: 33px;
  padding-top: 3px;
  background: linear-gradient(#1f50b8, #3a80ec 4px, #245edb 9px, #245edb 28px, #1c48b0);
  font: 11px/14px "DejaVu Sans Condensed", Tahoma, sans-serif;
  color: #fff;
}
.start {
  display: flex;
  align-items: center;
  gap: 3px;
  align-self: stretch;
  width: 98px;
  padding-left: 10px;
  border: 0;
  border-radius: 0 10px 12px 0;
  background: linear-gradient(#5eac56, #3c913c 6px, #3a993a 24px, #2a702a);
  box-shadow: inset -4px 0 5px #1e5c1e;
  font: italic bold 18px/20px "Liberation Sans", Arial, sans-serif;
  text-shadow: 1px 1px 2px #222;
}
.start svg { width: 21px; height: 21px; }
.handle { width: 6px; height: 20px; margin: 0 5px 0 9px; background: radial-gradient(circle, #12389c 1px, transparent 1px) 0 0 / 3px 4px; }
.tasks { display: flex; gap: 2px; flex: 1; min-width: 0; }
.tasks button {
  display: flex;
  align-items: center;
  gap: 4px;
  width: 158px;
  height: 25px;
  padding-left: 9px;
  border: 0;
  border-radius: 3px;
  background: linear-gradient(#5a9cfc, #3c81f3 4px, #3577ec);
  white-space: nowrap;
}
.tasks .active { background: #1e52b7; box-shadow: inset 1px 1px 2px #0c2c78; }
.lang { margin: 0 3px 0 0; }
.expand { position: relative; z-index: 1; width: 18px; height: 18px; border: 0; background: none; }
.tray {
  display: flex;
  align-items: center;
  align-self: stretch;
  gap: 2px;
  margin-left: -8px;
  padding: 0 13px 0 10px;
  border-top: 1px solid #38b4fc;
  background: linear-gradient(#18a0f0, #118be8 24px, #0c6cc8);
}
.tray svg { width: 16px; height: 16px; }
.tray time { margin-left: 7px; }
```
